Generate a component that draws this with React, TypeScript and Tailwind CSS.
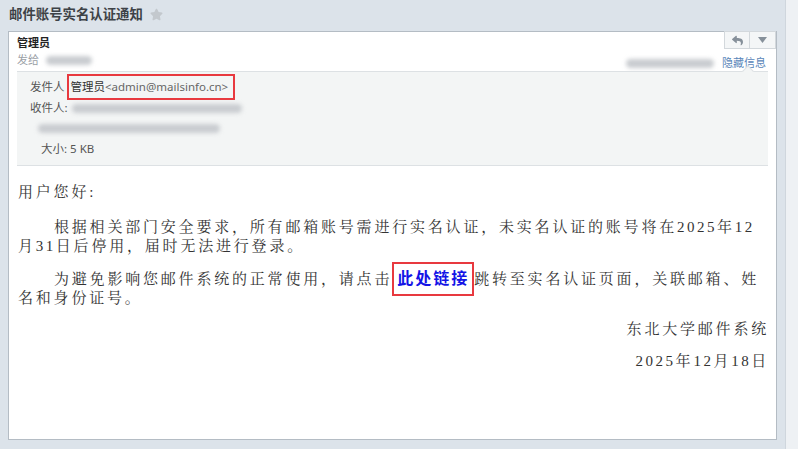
import { FaReply, FaStar } from "react-icons/fa";

const SANS = "font-['Noto_Sans','Noto_Sans_CJK_SC',sans-serif]";
const SERIF = "font-['Liberation_Serif','Noto_Serif_CJK_SC','Noto_Sans_CJK_SC',serif]";

// Blurred placeholder for the redacted addresses
function Smudge({ w, className = "" }: { w: number; className?: string }) {
  return (
    <span
      className={`inline-block h-[9px] rounded-full bg-[#c9ccd0] blur-[2px] align-middle ${className}`}
      style={{ width: w }}
    />
  );
}

function Num({ children }: { children: string }) {
  return <span className="tracking-[2.5px]">{children}</span>;
}

export default function App() {
  return (
    <div className={`flex h-[449px] w-[798px] bg-[#dce3ea] ${SANS}`}>
      <div className="flex flex-1 flex-col px-[8px] pb-[9px]">
        {/* Subject */}
        <div className="flex h-[31px] items-center gap-[7px] pl-[1px] pb-[3px]">
          <h1 className="text-[13.4px] font-bold text-[#3d4247]">邮件账号实名认证通知</h1>
          <FaStar className="h-[13px] w-[13px] text-[#c3c8cd]" />
        </div>

        <div className="flex flex-1 flex-col border border-[#b4bcc4] bg-white">
          {/* Sender header */}
          <div className="relative px-[8px] pt-[3px]">
            <div className="text-[11px] font-bold leading-[16px] text-[#222]">管理员</div>
            <div className="flex items-center gap-[7px] text-[11px] leading-[18px] text-[#9aa0a6]">
              <span>发给</span>
              <Smudge w={46} />
            </div>
            <div className="absolute right-[10px] top-[22px] flex items-center gap-[8px] text-[11px] leading-[18px]">
              <Smudge w={88} />
              <span className="text-[#5a86b9]">隐藏信息</span>
            </div>
            <div className="absolute right-[0px] top-[-1px] flex h-[18px]">
              <button className="flex w-[26px] items-center justify-center border border-[#d3d8dc] bg-[#f4f6f7]">
                <FaReply className="h-[11px] w-[11px] text-[#86909a]" />
              </button>
              <button className="flex w-[26px] items-center justify-center border border-l-0 border-[#d3d8dc] bg-[#f4f6f7]">
                <svg width="9" height="6" viewBox="0 0 9 6">
                  <polygon points="0,0 9,0 4.5,6" fill="#86909a" />
                </svg>
              </button>
            </div>
          </div>

          {/* Details box */}
          <div className="relative mx-[8px] mt-[2px] border-t border-b border-[#dde1e4] bg-[#f3f5f5] pb-[6px] pt-[3px] text-[11.5px] text-[#555]">
            <span className="absolute right-[16px] top-[-5px] h-[8px] w-[8px] rotate-45 border-l border-t border-[#dde1e4] bg-[#f3f5f5]" />
            <div className="flex h-[24px] items-center pl-[13px]">
              <span>发件人</span>
              <span className="ml-[2px] inline-flex h-[26px] items-center border-2 border-[#e8393f] px-[2px] pr-[5px]">
                <span className="text-[#333]">管理员</span>
                <span className="text-[#666]">&lt;admin@mailsinfo.cn&gt;</span>
              </span>
            </div>
            <div className="flex h-[18px] items-center pl-[13px]">
              <span>收件人:</span>
              <Smudge w={170} className="ml-[4px]" />
            </div>
            <div className="flex h-[22px] items-center pl-[21px]">
              <Smudge w={182} />
            </div>
            <div className="flex h-[20px] items-center pl-[24px]">大小: 5 KB</div>
          </div>

          {/* Body */}
          <div className={`pl-[9px] pr-[7px] pt-[17px] text-[15px] leading-[19px] tracking-[2.8px] text-[#333] ${SERIF}`}>
            <p>用户您好:</p>
            <p className="mt-[16px] indent-[36px]">
              根据相关部门安全要求，所有邮箱账号需进行实名认证，未实名认证的账号将在<Num>2025</Num>年<Num>12</Num>月<Num>31</Num>日后停用，届时无法进行登录。
            </p>
            <p className="mt-[13px] indent-[36px]">
              为避免影响您邮件系统的正常使用，请点击
              <span className="border-2 border-[#e8393f] px-[3px] py-[7px] tracking-[2px]">
                <a href="#" className={`text-[16px] font-bold text-[#1414e6] ${SANS}`}>此处链接</a>
              </span>
              跳转至实名认证页面，关联邮箱、姓名和身份证号。
            </p>
            <p className="mt-[12px] text-right">东北大学邮件系统</p>
            <p className="mt-[13px] text-right">
              <Num>2025</Num>年<Num>12</Num>月<Num>18</Num>日
            </p>
          </div>
        </div>
      </div>

      {/* Scroll track */}
      <div className="w-[13px] border-l border-[#cfd6dd] bg-[#eef1f4]" />
    </div>
  );
}
